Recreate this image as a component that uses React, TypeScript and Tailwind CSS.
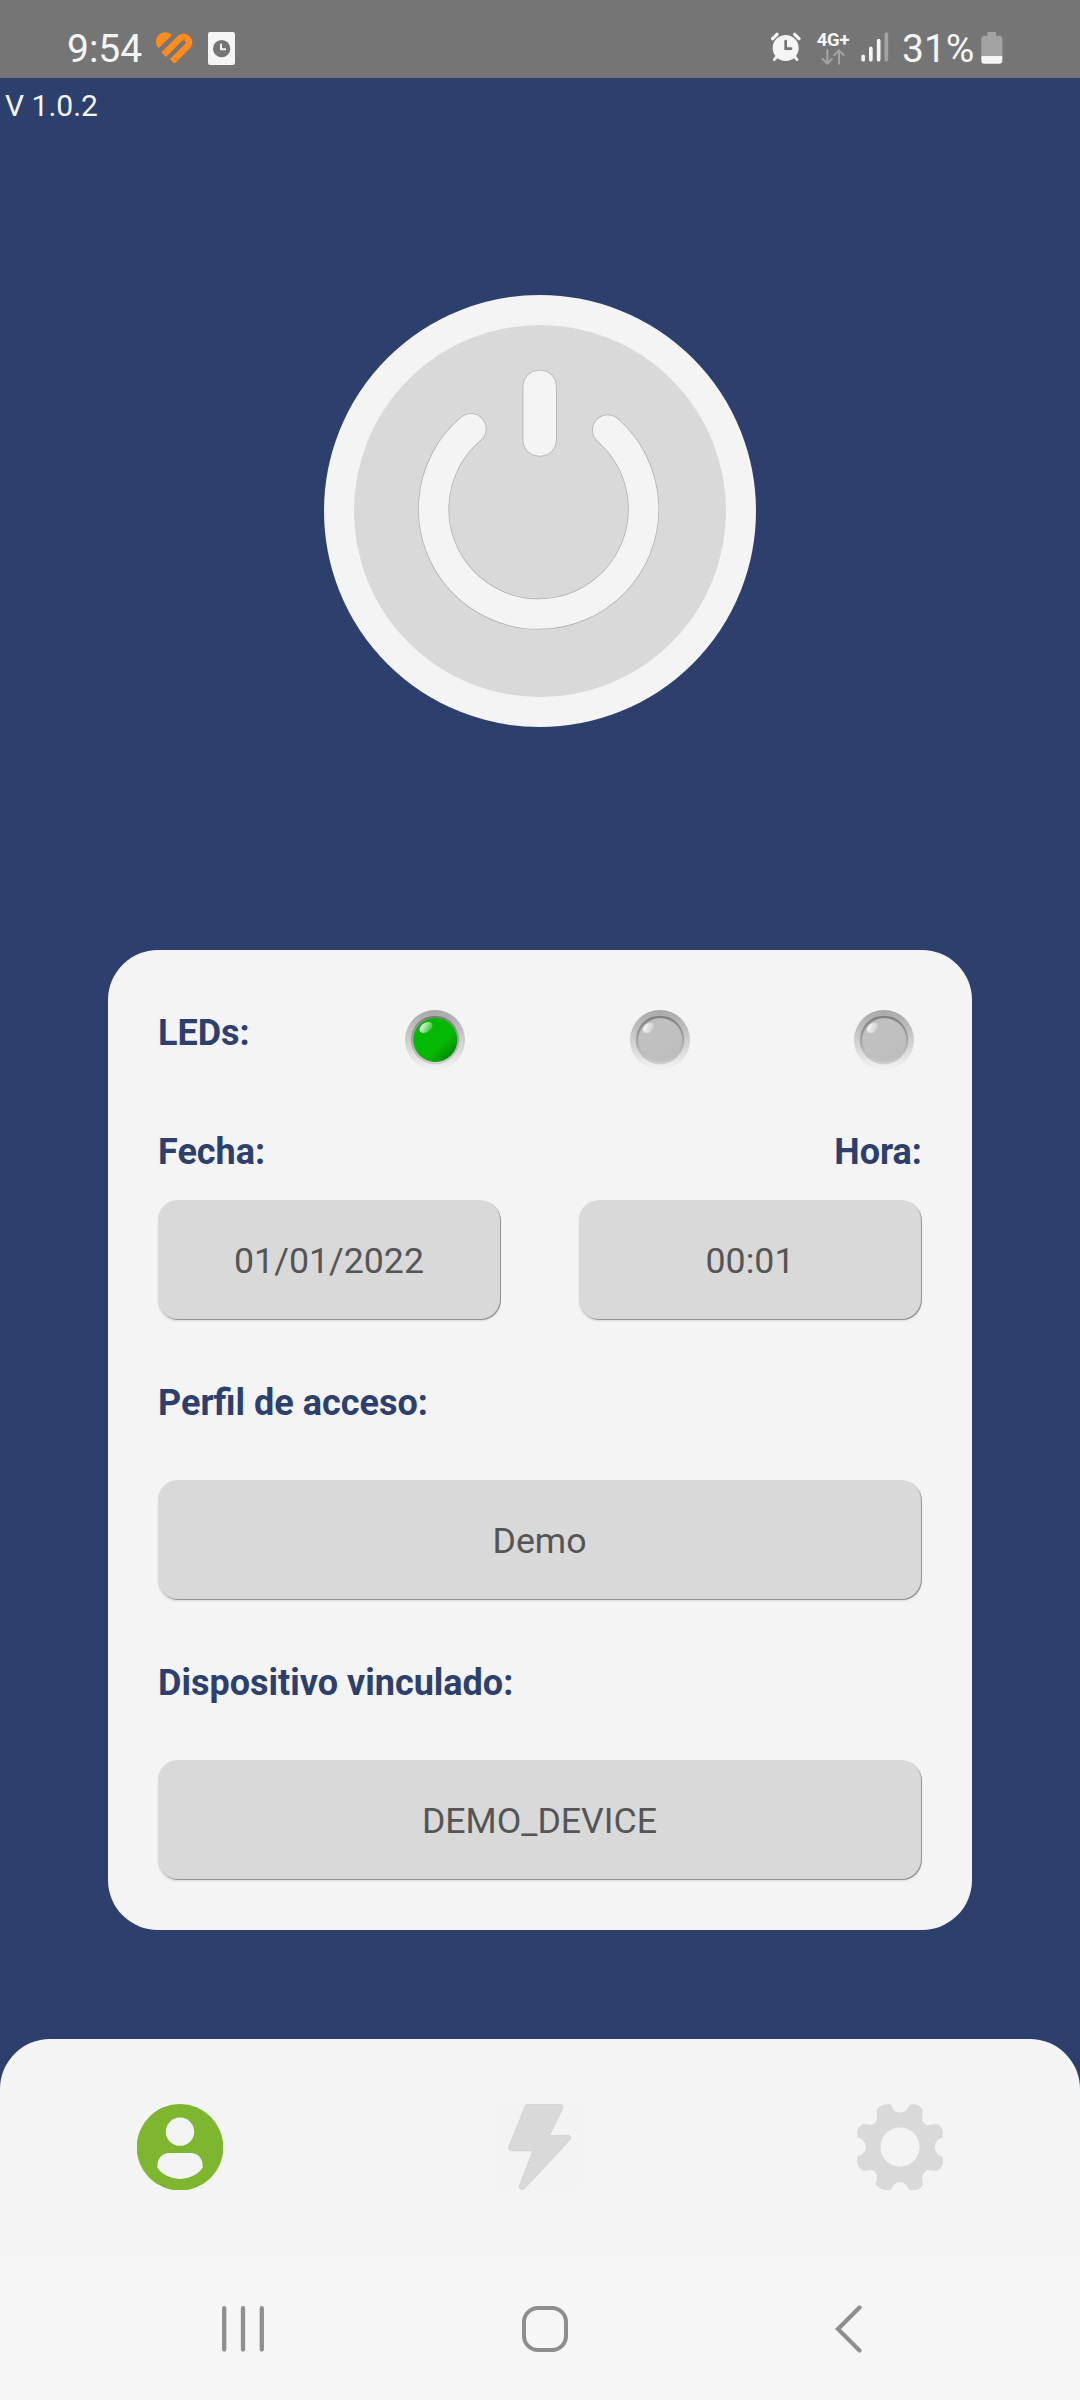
import type { ReactNode } from "react"

interface LedProps { id: string; on?: boolean }
interface FieldProps { children: ReactNode; className?: string }

function StatusBar() {
  return (
    <header className="flex h-[78px] w-full items-start bg-[#757575] pt-8 text-[#f5f5f5]">
      <span className="ml-[67px] h-[46px] w-[77px] whitespace-nowrap text-[39px] leading-[34px]">9:54</span>
      <svg className="ml-3 h-[31px] w-[37px]" viewBox="467 97 111 93">
        <path d="M490 165 L540 115 A16.500 16.500 0 0 1 563 138 L515.500 185.500" fill="none" stroke="#ff8a1e" strokeWidth="19.500" />
        <path fill="#ff8a1e" d="M475 146 A27.500 27.500 0 0 1 515 106 Z" />
      </svg>
      <svg className="ml-[15px] h-[33px] w-[27px]" viewBox="0 0 81 99">
        <rect width="81" height="99" rx="7" fill="#f5f5f5" />
        <circle cx="41" cy="50" r="26" fill="#757575" />
        <path d="M39 35 V52 H54" fill="none" stroke="#f5f5f5" strokeWidth="6" />
      </svg>

      {/* right side indicators */}
      <svg className="ml-auto h-[30px] w-[30px]" viewBox="92 99 90 90">
        <circle cx="136" cy="147" r="39" fill="#f5f5f5" />
        <path d="M97 119 L110 106 M163 106 L176 119" stroke="#f5f5f5" strokeWidth="10" strokeLinecap="round" />
        <path d="M110 172 L102 182 M162 172 L170 182" stroke="#f5f5f5" strokeWidth="9" strokeLinecap="round" />
        <path d="M136 126 V149 H152" fill="none" stroke="#757575" strokeWidth="8" strokeLinecap="round" />
      </svg>
      <div className="ml-[15px] flex w-[34px] flex-col items-center">
        <span className="h-[17px] text-[18.5px] leading-[16px] font-bold tracking-[-0.3px]">4G+</span>
        <svg className="h-[16px] w-[24px]" viewBox="242 147 72 48">
          <path
            d="M261 150 V190 M247 177 L261 191 L275 177 M296 191 V152 M282 165 L296 151 L310 165"
            fill="none" stroke="#a3a3a3" strokeWidth="6" strokeLinecap="round"
          />
        </svg>
      </div>
      <svg className="ml-[11px] h-[30px] w-[28px]" viewBox="365 98 84 90">
        <g strokeWidth="11" strokeLinecap="round" stroke="#f5f5f5">
          <path d="M371.500 171 V181 M394.500 147 V181 M418 124 V181" />
          <path d="M441 104 V181" stroke="#a3a3a3" />
        </g>
      </svg>
      <span className="ml-[13px] w-[76px] whitespace-nowrap text-[39px] leading-[34px]">31%</span>
      <svg className="mr-[77px] ml-[3px] h-[32px] w-[22px]" viewBox="725 96 66 96">
        <path d="M744 96 H770 V107 H780 Q789 107 789 117 V168 H726 V117 Q726 107 735 107 H744 Z" fill="#a3a3a3" />
        <path d="M726 168 H789 V182 Q789 191 780 191 H735 Q726 191 726 182 Z" fill="#f5f5f5" />
      </svg>
    </header>
  )
}

function PowerButton() {
  return (
    <button className="flex size-[432px] items-center justify-center rounded-full border-[30px] border-[#f4f4f4] bg-[#d9d9d9]">
      <svg className="size-[372px]" viewBox="354 325 372 372">
        <g fill="none" strokeLinecap="round">
          <path d="M471 428.700 A105 105 0 1 0 607.700 430" stroke="#adadad" strokeWidth="31" />
          <path d="M471 428.700 A105 105 0 1 0 607.700 430" stroke="#f4f4f4" strokeWidth="29.600" />
        </g>
        <rect x="522.900" y="370.200" width="33.600" height="86" rx="16" fill="#f4f4f4" stroke="#adadad" strokeWidth="0.800" />
      </svg>
    </button>
  )
}

function Led({ id, on }: LedProps) {
  return (
    <svg className="size-[60px]" viewBox="0 0 60 60">
      <defs>
        <linearGradient id={`${id}-rim`} x1="0" y1="0" x2="0" y2="1">
          <stop offset="0" stopColor="#a8a8a8" />
          <stop offset="1" stopColor="#f3f3f3" />
        </linearGradient>
        <linearGradient id={`${id}-ring`} x1="0" y1="0" x2="0" y2="1">
          <stop offset="0" stopColor="#7c7c7c" />
          <stop offset="1" stopColor="#cfcfcf" />
        </linearGradient>
        <linearGradient id={`${id}-face`} x1="0.100" y1="0.100" x2="0.900" y2="0.900">
          <stop offset="0.650" stopColor={on ? "#05b803" : "#c0c0c0"} />
          <stop offset="1" stopColor={on ? "#038203" : "#bcbcbc"} />
        </linearGradient>
        <linearGradient id={`${id}-shine`} x1="0" y1="0" x2="0.800" y2="1">
          <stop offset="0.100" stopColor="#fff" stopOpacity="0.950" />
          <stop offset="1" stopColor="#fff" stopOpacity="0.150" />
        </linearGradient>
      </defs>
      <circle cx="30" cy="30" r="30" fill={`url(#${id}-rim)`} />
      <circle cx="30" cy="30" r="24.300" fill={`url(#${id}-ring)`} />
      <circle cx="30.300" cy="30" r="22" fill={`url(#${id}-face)`} />
      <ellipse
        cx={on ? 21 : 18.500} cy={on ? 17.500 : 18} rx={on ? 7.200 : 6} ry={on ? 4.600 : 4.400}
        transform={on ? "rotate(-34 21 17.500)" : "rotate(-38 18.500 18)"}
        fill={`url(#${id}-shine)`}
      />
    </svg>
  )
}

function Label({ children }: { children: ReactNode }) {
  return <h2 className="h-12 text-[36px] leading-[48px] font-bold whitespace-nowrap text-[#2d3f6c]">{children}</h2>
}

function Field({ children, className = "" }: FieldProps) {
  return (
    <div className={`flex h-[119px] items-center justify-center rounded-[20px] bg-[#d9d9d9] pt-[5px] text-[35.7px] text-[#555] shadow-[1px_1px_0_#929292,0_2px_2px_#00000020] ${className}`}>
      {children}
    </div>
  )
}

function InfoCard() {
  return (
    <section className="mt-[223px] flex h-[980px] w-[864px] flex-col rounded-[50px] bg-[#f4f4f4] px-[50px] pt-[59px]">
      <div className="flex h-[61px] items-start">
        <div className="w-[247px]"><Label>LEDs:</Label></div>
        <div className="flex flex-1 justify-between pt-px pr-2">
          <Led id="led-a" on />
          <Led id="led-b" />
          <Led id="led-c" />
        </div>
      </div>

      <div className="mt-[58px] flex justify-between">
        <Label>Fecha:</Label>
        <Label>Hora:</Label>
      </div>
      <div className="mt-6 flex justify-between">
        <Field className="w-[342px]">01/01/2022</Field>
        <Field className="mr-px w-[342px]">00:01</Field>
      </div>

      <div className="mt-[60px]"><Label>Perfil de acceso:</Label></div>
      <Field className="mt-[53px] mr-px">Demo</Field>

      <div className="mt-[60px]"><Label>Dispositivo vinculado:</Label></div>
      <Field className="mt-[53px] mr-px">DEMO_DEVICE</Field>
    </section>
  )
}

function TabBar() {
  return (
    <nav className="mt-[109px] grid h-[217px] w-full grid-cols-3 justify-items-center rounded-t-[50px] bg-[#f4f4f4] pt-[65px]">
      {/* profile */}
      <svg className="size-[86px]" viewBox="0 0 258 258">
        <circle cx="129" cy="130" r="130" fill="#7fb62f" />
        <circle cx="129" cy="83" r="42.500" fill="#f4f4f4" />
        <path d="M97 147 H161 C182 147 197 163 197 186 V190 C190 205 162 225 129 225 C96 225 68 205 61 190 V186 C61 163 76 147 97 147 Z" fill="#f4f4f4" />
      </svg>
      {/* energy */}
      <svg className="size-[86px]" viewBox="0 0 258 258">
        <defs>
          <pattern id="hatch" width="13" height="13" patternUnits="userSpaceOnUse">
            <path d="M0 13 L13 0" stroke="#efefef" strokeWidth="2" />
          </pattern>
        </defs>
        <rect width="258" height="258" fill="url(#hatch)" />
        <path
          d="M94 1 H188 Q200 2 198 12 L158 94 H214 Q223 95 222 104 L158 174 L82 254 Q69 261 66 248 L107 141 H43 Q33 139 35 128 L83 9 Q85 1 94 1 Z"
          fill="#d9d9d9" stroke="#b9b9b9" strokeWidth="2" strokeDasharray="4 4"
        />
      </svg>
      {/* settings */}
      <svg className="size-[86px]" viewBox="0 0 258 258">
        <path
          fill="#d9d9d9" stroke="#c4c4c4" strokeWidth="1.500" strokeDasharray="3 6" fillRule="evenodd"
          d="M129 26 C113 26 106 16 102 3 Q99 0 88 1 Q70 4 60 17 V42 C60 54 53 63 41 63 L18 61 Q8 64 1 82 V98 C16 105 27 114 27 129 C27 144 16 152 1 159 V175 Q5 192 18 200 L46 198 C55 200 60 208 60 216 V231 L55 240 Q69 257 88 258 H101 C107 244 114 234 129 234 C144 234 151 244 157 258 H175 Q188 256 197 243 L195 218 C197 207 204 200 212 198 L241 200 Q254 192 257 176 V160 C242 152 233 144 233 129 C233 114 242 106 257 100 V82 Q252 64 240 61 L212 64 C202 61 195 54 195 44 L197 18 Q187 3 171 1 L158 2 C152 16 145 26 129 26 Z M129 70 A59 59 0 1 0 129 188 A59 59 0 1 0 129 70 Z"
        />
      </svg>
    </nav>
  )
}

function SystemNav() {
  return (
    <footer className="h-36 w-full bg-[#f6f6f6]">
      <div className="ml-[92px] grid h-full w-[906px] grid-cols-3 items-center justify-items-center pt-[2px]">
        <svg className="h-[46px] w-[42px]" viewBox="0 0 42 46">
          <path d="M2.200 2.200 V43.500 M21 2.200 V43.500 M39.800 2.200 V43.500" stroke="#8e8e8e" strokeWidth="4.300" strokeLinecap="round" />
        </svg>
        <div className="size-[46px] rounded-[16px] border-4 border-[#8e8e8e]" />
        <svg className="ml-[3px] h-[48px] w-[28px]" viewBox="0 0 28 48">
          <path d="M24.500 2.500 L3 24 L24.500 45.500" fill="none" stroke="#8e8e8e" strokeWidth="4.200" strokeLinecap="round" />
        </svg>
      </div>
    </footer>
  )
}

export default function App() {
  return (
    <div className="flex h-[2400px] w-[1080px] flex-col overflow-hidden bg-[#2d3f6c] font-['Roboto',sans-serif]">
      <StatusBar />
      <main className="flex flex-col items-center">
        <p className="h-[217px] w-full pt-2 pl-[5px] text-[30px] leading-[40px] text-[#f4f4f4]">V 1.0.2</p>
        <PowerButton />
        <InfoCard />
      </main>
      <TabBar />
      <SystemNav />
    </div>
  )
}
